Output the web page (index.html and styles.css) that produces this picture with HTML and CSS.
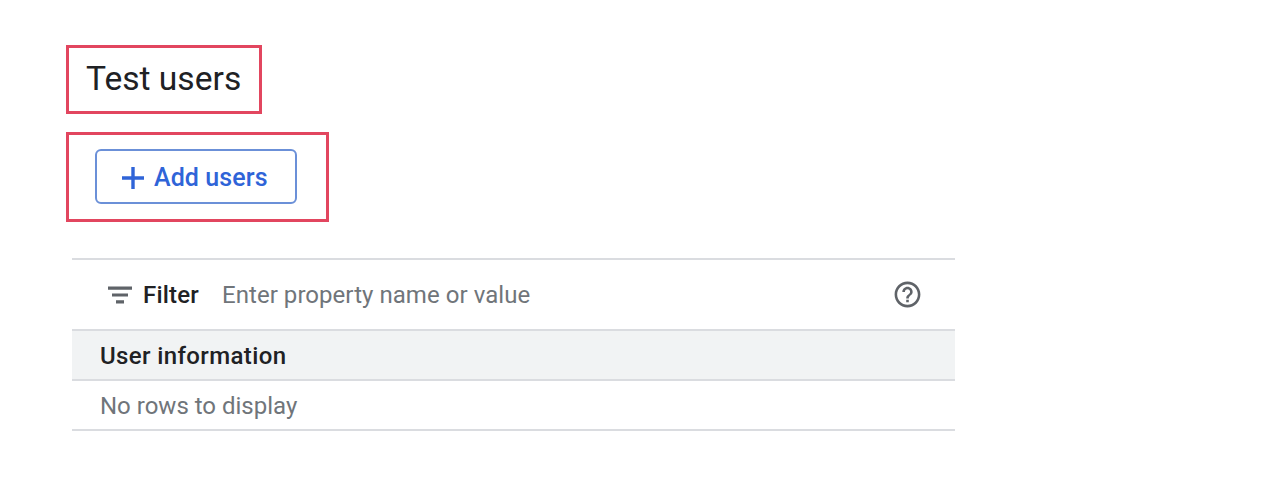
FILE: index.html
```html
<!DOCTYPE html>
<html lang="en">
<head>
<meta charset="UTF-8">
<meta name="viewport" content="width=device-width, initial-scale=1.0">
<title>Test users</title>
<link rel="stylesheet" href="styles.css">
</head>
<body>

<div class="container">
  <div class="callout callout-title">
    <h1>Test users</h1>
  </div>
  <div class="callout callout-button">
    <button class="add-btn">
      <svg width="24" height="24" viewBox="0 0 24 24"><path d="M1 10.300h9.300V1h3.400v9.300H23v3.400h-9.300V23h-3.400v-9.300H1z"/></svg>
      <span>Add users</span>
    </button>
  </div>

  <div class="table">
    <div class="filter-row">
      <svg class="filter-icon" width="28" height="28" viewBox="0 0 28 28"><path d="M2 5.500h24v3.200H2zM6 12.400h16v3.200H6zM10 19.300h8v3.200h-8z"/></svg>
      <span class="filter-label">Filter</span>
      <span class="filter-hint">Enter property name or value</span>
      <svg class="help-icon" width="31" height="31" viewBox="0 0 24 24"><path d="M11 18h2v-2h-2v2zm1-16C6.480 2 2 6.480 2 12s4.480 10 10 10 10-4.480 10-10S17.520 2 12 2zm0 18c-4.410 0-8-3.590-8-8s3.590-8 8-8 8 3.590 8 8-3.590 8-8 8zm0-14c-2.210 0-4 1.790-4 4h2c0-1.100.9-2 2-2s2 .9 2 2c0 2-3 1.750-3 5h2c0-2.250 3-2.500 3-5 0-2.210-1.790-4-4-4z"/></svg>
    </div>
    <div class="header-row">User information</div>
    <div class="empty-row">No rows to display</div>
  </div>
</div>

</body>
</html>
```

FILE: styles.css
```css
body {
  margin: 0;
  background-color: #fff;
  font-family: Roboto, sans-serif;
  color: #202124;
}
.container {
  padding: 45px 0 0 66px;
}
.callout {
  border: 3px solid #e2465f;
  box-sizing: border-box;
}
.callout-title {
  width: 196px;
  height: 69px;
  padding-left: 17px;
}
h1 {
  margin: 0;
  font-size: 33.6px;
  font-weight: 400;
  line-height: 62px;
}
.callout-button {
  width: 263px;
  height: 90px;
  margin-top: 18px;
  padding: 14px 0 0 26px;
}
.add-btn {
  display: flex;
  align-items: center;
  gap: 9px;
  width: 202px;
  height: 55px;
  padding: 2px 0 0 24px;
  box-sizing: border-box;
  background: #fff;
  border: 2px solid #6b90d8;
  border-radius: 6px;
  color: #2f64d8;
  font-family: Roboto, sans-serif;
  font-size: 25px;
  font-weight: 500;
}
.add-btn svg {
  fill: #2f64d8;
  flex: none;
}
.add-btn span {
  letter-spacing: 0.1px;
}
.table {
  width: 883px;
  margin: 36px 0 0 6px;
  border-top: 2px solid #dadce0;
}
.filter-row {
  display: flex;
  align-items: center;
  height: 69px;
  padding: 0 32px 0 34px;
  font-size: 24px;
}
.filter-icon {
  fill: #5f6368;
  flex: none;
}
.filter-label {
  margin-left: 9px;
  font-weight: 500;
  letter-spacing: 0.2px;
}
.filter-hint {
  margin-left: 23px;
  color: #70757a;
  letter-spacing: 0.05px;
  flex: 1;
}
.help-icon {
  fill: #5f6368;
  flex: none;
}
.header-row, .empty-row {
  height: 48px;
  line-height: 50px;
  padding-left: 28px;
  font-size: 24px;
}
.header-row {
  background-color: #f1f3f4;
  border-top: 2px solid #dadce0;
  border-bottom: 2px solid #dadce0;
  font-weight: 500;
  letter-spacing: 0.38px;
}
.empty-row {
  color: #70757a;
  border-bottom: 2px solid #dadce0;
}
```
